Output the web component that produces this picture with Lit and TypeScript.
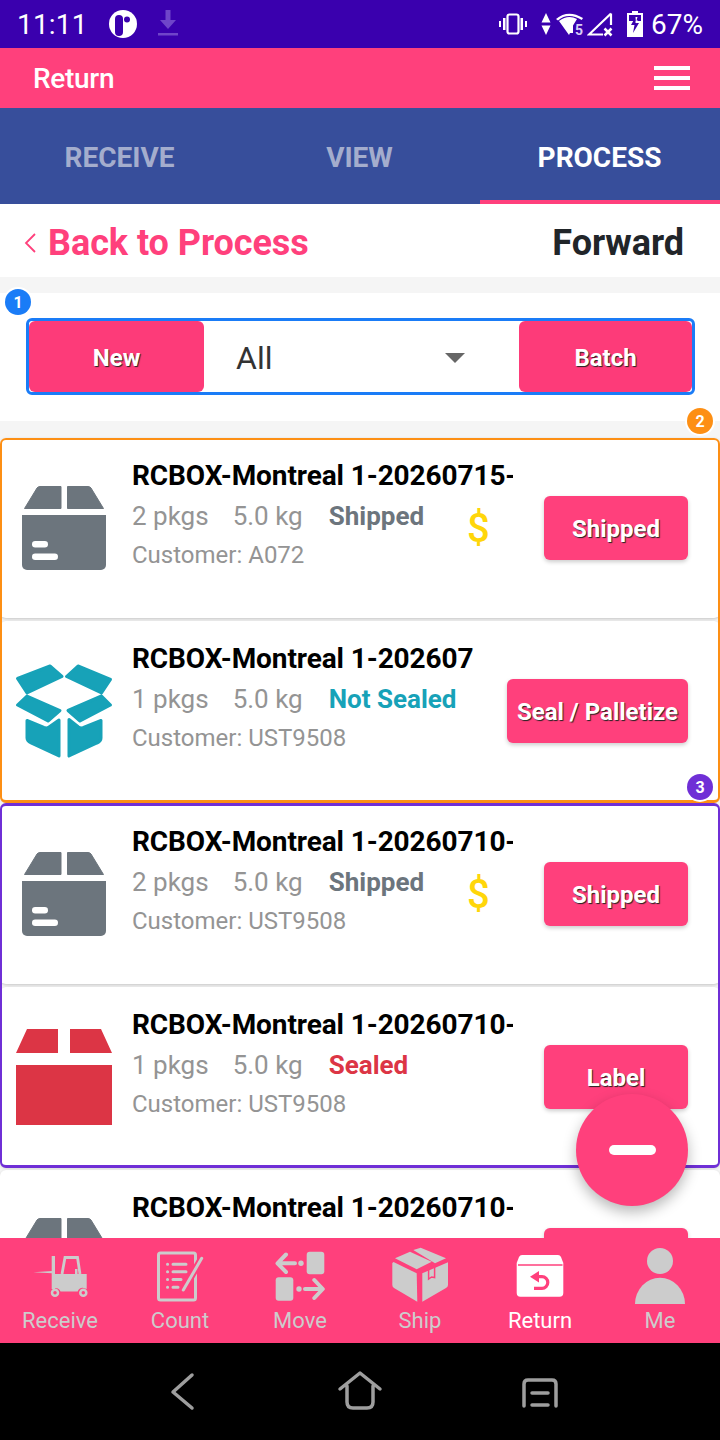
import { LitElement, css, html, svg } from "lit";
import { customElement } from "lit/decorators.js";

type Card = {
  title: string;
  pkgs: number;
  status: string;
  tone: string;
  customer: string;
  action: string;
  paid?: boolean;
};

const grayBox = svg`<path fill="#6c757d" stroke="#6c757d" stroke-linejoin="round" stroke-width="1" d="M8.5 28.5 21 8q1-1.5 3-1.5h21v22zM51.5 6.5H72q2 0 3 1.5l12.500 20.500H51.500z"/>
  <path fill="#6c757d" d="M6 35h84v50a5 5 0 0 1-5 5H11a5 5 0 0 1-5-5z"/>
  <rect x="16" y="61" width="16" height="6.500" rx="3.200" fill="#fff"/><rect x="16" y="73.500" width="26" height="6.500" rx="3.200" fill="#fff"/>`;
const tealBox = svg`<g fill="#17a2b8" stroke="#17a2b8" stroke-width="3" stroke-linejoin="round">
  <path d="M1.500 15.500 34 3l12 10.500L11 30zM50.500 13.500 62 3l32.500 13.500L85.500 30zM1.500 42 11 33l33 14.500L32 58zM52 47.500 85.500 33l9 9L64 58z"/>
  <path d="M11 57.500l17 7q3 1 5-.5l10-7v36L15 80q-4-2-4-5zM53 56.500l9.500 7.500q2 1.500 5 .5L85 57.500V75q0 3.500-4 5L53 93z"/></g>`;
const redBox = svg`<path fill="#dc3545" d="M11 0h31v24H0zM54 0h31l11 24H54zM0 36h96v60H0z"/>`;

const icons: Record<string, unknown> = { gray: grayBox, teal: tealBox, red: redBox };

// titles are cut by the app itself, keep what the list shows
const cards: Card[] = [
  { title: "RCBOX-Montreal 1-20260715-", pkgs: 2, status: "Shipped", tone: "gray", customer: "A072", action: "Shipped", paid: true },
  { title: "RCBOX-Montreal 1-202607", pkgs: 1, status: "Not Sealed", tone: "teal", customer: "UST9508", action: "Seal / Palletize" },
  { title: "RCBOX-Montreal 1-20260710-", pkgs: 2, status: "Shipped", tone: "gray", customer: "UST9508", action: "Shipped", paid: true },
  { title: "RCBOX-Montreal 1-20260710-", pkgs: 1, status: "Sealed", tone: "red", customer: "UST9508", action: "Label" },
  { title: "RCBOX-Montreal 1-20260710-", pkgs: 2, status: "Shipped", tone: "gray", customer: "UST9508", action: "Shipped", paid: true },
];

const navItems = [
  {
    label: "Receive",
    icon: svg`<path d="M3.300 24.300 22 23v2.300z"/><rect x="21.700" y="8" width="3.300" height="33"/>
      <path fill="none" stroke="currentColor" stroke-width="2.800" d="M32 26l3-16.500h12.500L50 26"/>
      <path d="M25 26h20v-5h2.500v5h9.200v15l-3-1a5 5 0 0 0-6 3.500H30.500A5.500 5.500 0 0 0 25 40z"/>
      <circle cx="25" cy="44.700" r="3" fill="none" stroke="currentColor" stroke-width="2.500"/><circle cx="53.300" cy="44.700" r="3" fill="none" stroke="currentColor" stroke-width="2.500"/>`,
  },
  {
    label: "Count",
    icon: svg`<rect x="8.500" y="5" width="37" height="47" rx="2" fill="none" stroke="currentColor" stroke-width="3"/>
      <g fill="none" stroke="currentColor" stroke-width="3" stroke-linecap="round">
      <path d="M17.500 16.300h.1M23 16.300h13M17.500 23.700h.1M23 23.700h13M17.500 31.500h.1M23 31.500h8M17.500 39.300h.1M23 39.300h5"/></g>
      <path d="M51.700 10.300 33.300 42" stroke="#ff407c" stroke-width="7"/><path d="M51.700 10.300 33.300 42" stroke="currentColor" stroke-width="3" stroke-linecap="round"/>`,
  },
  {
    label: "Move",
    icon: svg`<rect x="36.700" y="3.700" width="17.600" height="22.600" rx="3"/><rect x="5.700" y="29.300" width="17.600" height="23.400" rx="3"/>
      <g fill="none" stroke="currentColor" stroke-width="4" stroke-linecap="round" stroke-linejoin="round"><path d="M25 15.300H8M16 6.500 7.500 15.300l8.500 8.700M35 41h17M44.300 32l8.500 9-8.500 9"/></g>
      <circle cx="31" cy="15.300" r="2.700"/><circle cx="29" cy="41" r="2.700"/>`,
  },
  {
    label: "Ship",
    icon: svg`<path d="M3.500 14 26.700 25.300l.6 28.400L4 40q-1.700-1-1.700-3V15z"/><path d="M32.300 25.300 58 14.300V37q0 2-2 3L32.300 53.700z"/>
      <path d="M5 10.300 20 3.700l21.700 10-15 7.600zM23.300 2l7.400-2.300L56 10.300l-11 5z"/>
      <path d="M38.600 18.500V31l3-2 3 .5V16" fill="none" stroke="#ff407c" stroke-width="1.500"/>`,
  },
  {
    label: "Return",
    icon: svg`<path d="M12 7h36q2 0 3 2l2.300 6v30q0 3.700-3.700 3.700H10.400q-3.700 0-3.700-3.700V15L9 9q1-2 3-2z"/><path d="M8 17h44.500" stroke="#ff407c" stroke-width="1.500"/>
      <path d="M20 28.700 29 23v11.500z" fill="#ff407c"/><path d="M27 28.700h5a5.800 5.800 0 0 1 0 11.600h-8" fill="none" stroke="#ff407c" stroke-width="3.200"/>`,
    active: true,
  },
  {
    label: "Me",
    icon: svg`<circle cx="30" cy="13" r="13"/><path d="M5 56a25 26.300 0 0 1 50 0z"/>`,
  },
];

@customElement("app-root")
export class AppRoot extends LitElement {
  static styles = css`
    :host {
      display: block;
      width: 720px;
      font-family: Roboto, "Noto Sans", sans-serif;
    }
    .page {
      position: relative;
      height: 1440px;
      display: flex;
      flex-direction: column;
      background: #f5f5f5;
      overflow: hidden;
    }
    .status {
      height: 48px;
      flex: none;
      display: flex;
      align-items: center;
      background: #3a00ae;
      color: #fff;
      padding: 0 17px;
      box-sizing: border-box;
    }
    .status svg {
      display: block;
      flex: none;
    }
    .clock {
      font-size: 28px;
      letter-spacing: 0.2px;
      width: 92px;
    }
    .status-gap {
      flex: 1;
    }
    .percent {
      font-size: 28px;
      margin-left: 8px;
    }
    .vib {
      margin-right: 14px;
    }
    .updown {
      margin-right: 5px;
    }
    .wifi {
      margin-right: 3px;
    }
    .signal {
      margin-right: 14px;
    }
    .download {
      margin-left: 21px;
    }
    .appbar {
      height: 60px;
      flex: none;
      display: flex;
      align-items: center;
      justify-content: space-between;
      padding: 0 30px 0 33px;
      background: #ff407c;
      color: #fff;
      font-size: 28px;
      font-weight: 500;
      letter-spacing: -0.3px;
    }
    .burger {
      display: flex;
      flex-direction: column;
      gap: 6px;
    }
    .burger i {
      display: block;
      width: 36px;
      height: 4px;
      background: #fff;
    }
    .tabs {
      height: 96px;
      flex: none;
      display: grid;
      grid-template-columns: repeat(3, 1fr);
      background: #374e9b;
    }
    .tab {
      display: flex;
      align-items: center;
      justify-content: center;
      font-size: 28px;
      font-weight: 700;
      color: #a4adcd;
      box-sizing: border-box;
      border-bottom: 4px solid transparent;
      padding: 6px 1px 0 0;
    }
    .tab.on {
      color: #fff;
      border-bottom-color: #ff407c;
    }
    .backbar {
      height: 73px;
      flex: none;
      box-sizing: border-box;
      display: flex;
      align-items: center;
      justify-content: space-between;
      padding: 4px 36px 0 24px;
      background: #fff;
      font-size: 36px;
      font-weight: 700;
      letter-spacing: -0.05px;
    }
    .back {
      display: flex;
      align-items: center;
      gap: 12px;
      color: #ff407c;
    }
    .forward {
      color: #212529;
    }
    .panel {
      position: relative;
      flex: none;
      margin-top: 16px;
      background: #fff;
      padding: 25px 25px 26px 26px;
    }
    .filter {
      height: 77px;
      box-sizing: border-box;
      display: flex;
      align-items: stretch;
      border: 3px solid #1a7cf7;
      border-radius: 6px;
    }
    .filter button {
      flex: none;
      border: 0;
      border-radius: 6px;
      background: #fd3b79;
      color: #fff;
      font: 700 24px Roboto, sans-serif;
      text-shadow: 1px 1px 1px #222;
      padding: 2px 0 0;
    }
    .filter .new {
      width: 175px;
    }
    .filter .batch {
      width: 173px;
    }
    .select {
      flex: 1;
      display: flex;
      align-items: center;
      justify-content: space-between;
      padding: 2px 54px 0 32px;
      font-size: 32px;
      color: #333;
    }
    .caret {
      width: 0;
      height: 0;
      border-left: 10px solid transparent;
      border-right: 10px solid transparent;
      border-top: 10px solid #666;
    }
    .badge {
      position: absolute;
      width: 26px;
      height: 26px;
      border-radius: 50%;
      display: flex;
      align-items: center;
      justify-content: center;
      color: #fff;
      font-size: 16px;
      font-weight: 700;
      box-shadow: 0 0 0 2px #fff;
    }
    .panel .badge {
      left: 5px;
      top: -4px;
      background: #1a7cf7;
    }
    .list {
      position: relative;
      flex: 1;
      min-height: 0;
      padding-top: 17px;
    }
    .group {
      position: relative;
      display: flow-root;
    }
    .group::after {
      content: "";
      position: absolute;
      border-style: solid;
      border-radius: 6px;
      pointer-events: none;
    }
    .group.first {
      --mark: #fd8f14;
    }
    .group.second {
      --mark: #6f2fd6;
    }
    .group.first::after {
      inset: 0 0 1px;
      border-color: var(--mark);
      border-width: 2px 2px 3px;
    }
    .group.second::after {
      inset: -1px 0 2px;
      border-color: var(--mark);
      border-width: 3px 2px 3px;
    }
    .group .badge {
      right: 7px;
      top: -30px;
      background: var(--mark);
      z-index: 1;
    }
    .card {
      height: 180px;
      margin-bottom: 3px;
      box-sizing: border-box;
      display: flex;
      background: #fff;
      border-radius: 6px;
      box-shadow: 0 1px 3px rgba(0, 0, 0, 0.2);
      padding: 22px 32px 0 16px;
      gap: 20px;
    }
    .icon {
      flex: none;
      margin-top: 20px;
      width: 96px;
      height: 96px;
      overflow: visible;
    }
    .body {
      flex: 1;
      min-width: 0;
      margin-right: 11px;
    }
    .title {
      height: 32px;
      line-height: 32px;
      overflow: hidden;
      white-space: nowrap;
      font-size: 28px;
      font-weight: 700;
      letter-spacing: -0.1px;
      color: #000;
    }
    .meta {
      height: 38px;
      margin-top: 5px;
      display: flex;
      align-items: flex-start;
      line-height: 38px;
      font-size: 26px;
      color: #949494;
    }
    .meta .kg {
      margin-left: 24px;
    }
    .meta .state {
      margin-left: 26px;
      font-weight: 700;
    }
    .meta .fee {
      margin-left: 43px;
      margin-top: 13px;
      font-size: 40px;
      font-weight: 500;
      color: #ffd60a;
    }
    .customer {
      margin-top: 6px;
      font-size: 24px;
      line-height: 28px;
      color: #949494;
    }
    .action {
      flex: none;
      align-self: flex-start;
      min-width: 144px;
      height: 64px;
      margin-top: 36px;
      padding: 2px 10px 0;
      box-sizing: border-box;
      border: 0;
      border-radius: 6px;
      background: #ff407c;
      color: #fff;
      font: 700 24px Roboto, sans-serif;
      text-shadow: 1px 1px 1px #222;
      box-shadow: 0 2px 4px rgba(0, 0, 0, 0.2);
      white-space: nowrap;
    }
    .fab {
      position: absolute;
      left: 576px;
      top: 1094px;
      width: 112px;
      height: 112px;
      border-radius: 50%;
      background: #ff407c;
      box-shadow: 0 6px 14px rgba(0, 0, 0, 0.28);
      display: flex;
      align-items: center;
      justify-content: center;
      z-index: 3;
    }
    .fab i {
      width: 47px;
      height: 10px;
      border-radius: 5px;
      background: #fff;
    }
    .nav {
      position: relative;
      z-index: 2;
      height: 105px;
      flex: none;
      display: grid;
      grid-template-columns: repeat(6, 1fr);
      background: #ff407c;
    }
    .nav div {
      display: flex;
      flex-direction: column;
      align-items: center;
      color: #ccc;
      font-size: 22px;
      padding-top: 10px;
    }
    .nav svg {
      width: 60px;
      height: 60px;
      fill: currentColor;
      overflow: visible;
    }
    .nav span {
      line-height: 26px;
    }
    .nav .on {
      color: #fff;
    }
    .sysnav {
      position: relative;
      z-index: 2;
      height: 97px;
      flex: none;
      background: #000;
      display: block;
    }
    .state.gray {
      color: #6c757d;
    }
    .state.teal {
      color: #17a2b8;
    }
    .state.red {
      color: #dc3545;
    }
  `;

  private renderCard(c: Card) {
    return html`<div class="card">
      <svg class="icon" viewBox="0 0 96 96">${icons[c.tone]}</svg>
      <div class="body">
        <div class="title">${c.title}</div>
        <div class="meta">
          <span>${c.pkgs} pkgs</span><span class="kg">5.0 kg</span>
          <span class="state ${c.tone}">${c.status}</span>
          ${c.paid ? html`<span class="fee">$</span>` : null}
        </div>
        <div class="customer">Customer: ${c.customer}</div>
      </div>
      <button class="action">${c.action}</button>
    </div>`;
  }

  render() {
    return html`<div class="page">
      <div class="status">
        <div class="clock">11:11</div>
        <svg width="28" height="28" viewBox="0 0 28 28">
          <circle cx="14" cy="14" r="14" fill="#fff" />
          <rect x="6" y="5" width="8" height="21" rx="4" fill="#3a00ae" />
          <circle cx="18" cy="9.500" r="3" fill="#3a00ae" />
        </svg>
        <svg class="download" width="20" height="28" viewBox="0 0 20 28" fill="#6f45c9">
          <path d="M7.500 0h5v10H18l-8 9-8-9h5.500zM0 23h20v2.500H0z" />
        </svg>
        <div class="status-gap"></div>
        <svg class="vib" width="28" height="24" viewBox="0 0 28 24" fill="#fff">
          <path d="M0 9h2v6H0zM4 6h2.500v12H4zM21.500 6H24v12h-2.500zM26 9h2v6h-2z" />
          <rect x="8.500" y="2.500" width="11" height="19" rx="2" fill="none" stroke="#fff" stroke-width="2.200" />
        </svg>
        <svg class="updown" width="10" height="22" viewBox="0 0 10 22" fill="#fff">
          <path d="M5 0l4.500 9.500h-9zM5 22 .500 12.500h9z" />
        </svg>
        <svg class="wifi" width="28" height="24" viewBox="0 0 28 24" fill="#fff">
          <path d="M0 7Q12-3 27 6l-1.200 2Q12 0 2 8.500z" /><path d="M3 9Q12 2 21 7l-4 6.500v7.500h-3l-1 2z" />
          <text x="19" y="23" font-size="14" font-weight="700" fill="#d8ccf5" font-family="Roboto">5</text>
        </svg>
        <svg class="signal" width="26" height="26" viewBox="0 0 26 26">
          <path d="M24 2.500 2 23.500h14M24 2.500V14" fill="none" stroke="#fff" stroke-width="2.200" />
          <path d="M17.500 17.500l7 7M24.500 17.500l-7 7" stroke="#fff" stroke-width="2.500" />
        </svg>
        <svg width="16" height="26" viewBox="0 0 16 26">
          <path fill="#fff" d="M5 0h6v2h5v24H0V2h5zM2 4v6h12V4z" />
          <path fill="#3a00ae" d="M9 5 4 14h3.500L6 22l6-10H8.500z" />
          <path fill="#fff" d="M8.500 6h2L9.500 9.500h1.500l-2 3z" />
        </svg>
        <span class="percent">67%</span>
      </div>

      <div class="appbar">
        <span>Return</span>
        <div class="burger"><i></i><i></i><i></i></div>
      </div>

      <div class="tabs">
        <div class="tab">RECEIVE</div>
        <div class="tab">VIEW</div>
        <div class="tab on">PROCESS</div>
      </div>

      <div class="backbar">
        <div class="back">
          <svg width="12" height="20" viewBox="0 0 12 20" fill="none" stroke="#ff407c" stroke-width="1.800">
            <path d="M11 1 2 10l9 9" />
          </svg>
          Back to Process
        </div>
        <div class="forward">Forward</div>
      </div>

      <div class="panel">
        <div class="badge">1</div>
        <div class="filter">
          <button class="new">New</button>
          <div class="select"><span>All</span><i class="caret"></i></div>
          <button class="batch">Batch</button>
        </div>
      </div>

      <div class="list">
        <div class="group first">
          <div class="badge">2</div>
          ${cards.slice(0, 2).map((c) => this.renderCard(c))}
        </div>
        <div class="group second">
          <div class="badge">3</div>
          ${cards.slice(2, 4).map((c) => this.renderCard(c))}
        </div>
        ${this.renderCard(cards[4])}
      </div>

      <div class="fab"><i></i></div>

      <div class="nav">
        ${navItems.map(
          (n) => html`<div class=${n.active ? "on" : ""}>
            <svg viewBox="0 0 60 60">${n.icon}</svg>
            <span>${n.label}</span>
          </div>`
        )}
      </div>

      <svg class="sysnav" width="720" height="97" viewBox="0 0 720 97" fill="none" stroke="#9e9e9e" stroke-width="3.500" stroke-linecap="round" stroke-linejoin="round">
        <path d="M192 32 173 49l19 16" />
        <path d="M340 46 360 30l20 16M347 43v16q0 6 6 6h14q6 0 6-6V43" />
        <path d="M524 63V41q0-4 4-4h24q4 0 4 4v22M532 50h16M532 62h16" />
      </svg>
    </div>`;
  }
}
